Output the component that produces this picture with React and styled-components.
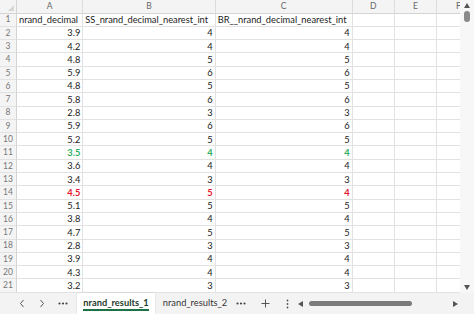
import React from "react";
import styled, { createGlobalStyle } from "styled-components";

const Global = createGlobalStyle`
  html, body { margin: 0; padding: 0; overflow: hidden; background: #fff; }
  * { box-sizing: border-box; }
`;

const Frame = styled.div`
  width: 474px;
  height: 314px;
  display: flex;
  flex-direction: column;
  font-family: "Lato", "Open Sans", sans-serif;
  font-size: 9.3px;
  color: #222;
  overflow: hidden;
`;

const Main = styled.div`
  display: flex;
  height: 293px;
`;

const Sheet = styled.div`
  flex: 1;
  min-width: 0;
  display: grid;
  grid-template-columns: 17px 66.3px 132.4px 137px 42.3px 42px 40px;
  grid-template-rows: 13.5px repeat(21, 13.3px);
  overflow: hidden;
  align-content: start;
`;

const Cell = styled.div`
  border-right: 1px solid #e2e2e2;
  border-bottom: 1px solid #e2e2e2;
  padding: 0 2px;
  display: flex;
  align-items: center;
  justify-content: ${(p) => (p.$num ? "flex-end" : "flex-start")};
  white-space: nowrap;
  overflow: visible;
  line-height: 1;
  font-weight: ${(p) => (p.$tone ? 700 : 400)};
  color: ${(p) =>
    p.$tone === "green" ? "#2fae5f" : p.$tone === "red" ? "#e5152e" : "#222"};
`;

const ColHead = styled.div`
  background: #f4f4f4;
  border-right: 1px solid #dcdcdc;
  border-bottom: 1px solid #d4d4d4;
  color: #666;
  font-size: 8.5px;
  display: flex;
  align-items: center;
  justify-content: ${(p) => (p.$cut ? "flex-start" : "center")};
  padding-left: ${(p) => (p.$cut ? "19px" : "0")};
  line-height: 1;
`;

const Corner = styled.div`
  background: #f4f4f4;
  border-right: 1px solid #d4d4d4;
  border-bottom: 1px solid #d4d4d4;
  position: relative;
  &::after {
    content: "";
    position: absolute;
    right: 2px;
    bottom: 2px;
    border-style: solid;
    border-width: 0 0 6px 6px;
    border-color: transparent transparent #d6d6d6 transparent;
  }
`;

const RowHead = styled.div`
  background: #f4f4f4;
  border-right: 1px solid #d4d4d4;
  border-bottom: 1px solid #e2e2e2;
  color: #777;
  font-size: 8.5px;
  display: flex;
  align-items: center;
  justify-content: center;
  line-height: 1;
`;

const VScroll = styled.div`
  width: 14px;
  flex-shrink: 0;
  background: #f7f7f7;
  display: flex;
  flex-direction: column;
  align-items: center;
  padding: 3px 0 3px;
`;

const Arrow = styled.div`
  width: 0;
  height: 0;
  flex-shrink: 0;
  border-style: solid;
  ${(p) =>
    p.$dir === "up"
      ? "border-width: 0 3.5px 5px 3.5px; border-color: transparent transparent #555 transparent;"
      : p.$dir === "down"
      ? "border-width: 5px 3.5px 0 3.5px; border-color: #555 transparent transparent transparent;"
      : p.$dir === "left"
      ? "border-width: 3.5px 5px 3.5px 0; border-color: transparent #555 transparent transparent;"
      : "border-width: 3.5px 0 3.5px 5px; border-color: transparent transparent transparent #555;"}
`;

const VThumb = styled.div`
  width: 6px;
  height: 11px;
  margin-top: 3px;
  border-radius: 3px;
  background: #8a8a8a;
`;

const Spacer = styled.div`
  flex: 1;
`;

const TabBar = styled.div`
  height: 21px;
  background: #f3f3f3;
  display: flex;
  align-items: center;
`;

const NavBtn = styled.div`
  width: ${(p) => p.$w || 14}px;
  margin-left: ${(p) => p.$ml || 0}px;
  display: flex;
  justify-content: center;
  align-items: center;
  color: #555;
  font-size: ${(p) => p.$fs || 10}px;
  line-height: 1;
  font-family: "DejaVu Sans", sans-serif;
  flex-shrink: 0;
`;

const Tab = styled.div`
  height: 100%;
  width: ${(p) => p.$w}px;
  margin-left: ${(p) => p.$ml || 0}px;
  flex-shrink: 0;
  display: flex;
  align-items: center;
  justify-content: center;
  background: ${(p) => (p.$active ? "#fff" : "transparent")};
  font-weight: ${(p) => (p.$active ? 700 : 400)};
  color: ${(p) => (p.$active ? "#1f3b2c" : "#333")};
  font-size: 9.3px;
  box-shadow: ${(p) => (p.$active ? "0 0 2px rgba(0,0,0,0.12)" : "none")};
`;

const TabLabel = styled.span`
  padding-bottom: 1px;
  border-bottom: ${(p) => (p.$active ? "2px solid #1e7145" : "2px solid transparent")};
  line-height: 1.1;
  margin-top: 2px;
  white-space: nowrap;
`;

const HScroll = styled.div`
  flex: 1;
  display: flex;
  align-items: center;
  height: 100%;
  padding: 0 16px 0 7px;
`;

const HThumb = styled.div`
  width: 103px;
  height: 5px;
  margin-left: 6px;
  border-radius: 3px;
  background: #7a7a7a;
`;

const Chevron = ({ dir }) => (
  <svg width="6" height="9" viewBox="0 0 6 9">
    <path
      d={dir === "left" ? "M4.5 1 L1.5 4.5 L4.5 8" : "M1.5 1 L4.5 4.5 L1.5 8"}
      fill="none"
      stroke="#555"
      strokeWidth="1"
    />
  </svg>
);

const Dots = () => (
  <svg width="10" height="3" viewBox="0 0 10 3">
    <circle cx="1.5" cy="1.5" r="1.1" fill="#444" />
    <circle cx="5" cy="1.5" r="1.1" fill="#444" />
    <circle cx="8.5" cy="1.5" r="1.1" fill="#444" />
  </svg>
);

const VDots = () => (
  <svg width="3" height="10" viewBox="0 0 3 10">
    <circle cx="1.5" cy="1.5" r="0.9" fill="#555" />
    <circle cx="1.5" cy="5" r="0.9" fill="#555" />
    <circle cx="1.5" cy="8.5" r="0.9" fill="#555" />
  </svg>
);

const Plus = () => (
  <svg width="9" height="9" viewBox="0 0 9 9">
    <path d="M4.5 0.5 V8.5 M0.5 4.5 H8.5" stroke="#555" strokeWidth="1" />
  </svg>
);

const colA = [3.9, 4.2, 4.8, 5.9, 4.8, 5.8, 2.8, 5.9, 5.2, 3.5, 3.6, 3.4, 4.5, 5.1, 3.8, 4.7, 2.8, 3.9, 4.3, 3.2];
const colB = [4, 4, 5, 6, 5, 6, 3, 6, 5, 4, 4, 3, 5, 5, 4, 5, 3, 4, 4, 3];
const colC = [4, 4, 5, 6, 5, 6, 3, 6, 5, 4, 4, 3, 4, 5, 4, 5, 3, 4, 4, 3];

const toneFor = (row) => (row === 11 ? "green" : row === 14 ? "red" : undefined);

export default function App() {
  const rows = [];
  rows.push(
    <React.Fragment key="r1">
      <RowHead>1</RowHead>
      <Cell>nrand_decimal</Cell>
      <Cell>SS_nrand_decimal_nearest_int</Cell>
      <Cell>BR__nrand_decimal_nearest_int</Cell>
      <Cell />
      <Cell />
      <Cell />
    </React.Fragment>
  );
  colA.forEach((a, i) => {
    const r = i + 2;
    const tone = toneFor(r);
    rows.push(
      <React.Fragment key={r}>
        <RowHead>{r}</RowHead>
        <Cell $num $tone={tone}>{a.toFixed(1)}</Cell>
        <Cell $num $tone={tone}>{colB[i]}</Cell>
        <Cell $num $tone={tone}>{colC[i]}</Cell>
        <Cell />
        <Cell />
        <Cell />
      </React.Fragment>
    );
  });

  return (
    <Frame>
      <Global />
      <Main>
        <Sheet>
          <Corner />
          <ColHead>A</ColHead>
          <ColHead>B</ColHead>
          <ColHead>C</ColHead>
          <ColHead>D</ColHead>
          <ColHead>E</ColHead>
          <ColHead $cut>F</ColHead>
          {rows}
        </Sheet>
        <VScroll>
          <Arrow $dir="up" />
          <VThumb />
          <Spacer />
          <Arrow $dir="down" />
        </VScroll>
      </Main>
      <TabBar>
        <NavBtn $ml={15}><Chevron dir="left" /></NavBtn>
        <NavBtn $ml={6}><Chevron dir="right" /></NavBtn>
        <NavBtn $ml={7}><Dots /></NavBtn>
        <Tab $active $w={78} $ml={7}>
          <TabLabel $active>nrand_results_1</TabLabel>
        </Tab>
        <Tab $w={80}>
          <TabLabel>nrand_results_2</TabLabel>
        </Tab>
        <NavBtn $w={12}><Dots /></NavBtn>
        <NavBtn $w={36}><Plus /></NavBtn>
        <NavBtn $w={8}><VDots /></NavBtn>
        <HScroll>
          <Arrow $dir="left" />
          <HThumb />
          <Spacer />
          <Arrow $dir="right" />
        </HScroll>
      </TabBar>
    </Frame>
  );
}
